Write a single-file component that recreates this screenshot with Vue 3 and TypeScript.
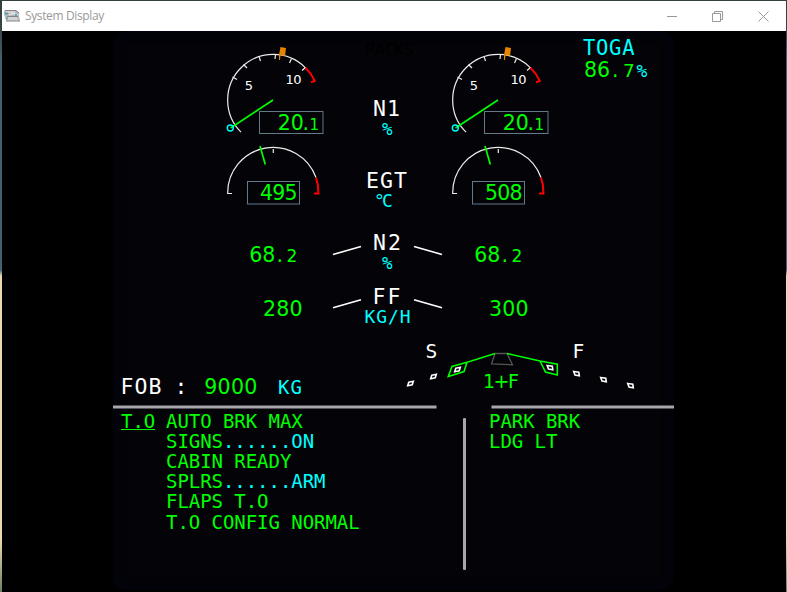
<script setup lang="ts">
interface Label {
  text: string
  x: number | string
  y: number
  tone: 'white' | 'green' | 'cyan' | 'dark'
  width?: number
  size?: number
}

interface Engine {
  shift: number
  egt: string
}

const engines: Engine[] = [
  { shift: 0, egt: '495' },
  { shift: 225, egt: '508' },
]

const labels: Label[] = [
  { text: 'PACKS', x: 365, y: 55, tone: 'dark', size: 16, width: 49 },
  { text: 'TOGA', x: 583, y: 54.8, tone: 'cyan', size: 20.5, width: 51.5 },
  { text: '86', x: 584, y: 76.5, tone: 'green', width: 26 },
  { text: '.', x: 612, y: 76.5, tone: 'green' },
  { text: '7', x: 623, y: 76.5, tone: 'green', size: 18.5 },
  { text: '%', x: 636.5, y: 76.8, tone: 'cyan', size: 18 },
  { text: 'N1', x: 373, y: 116.3, tone: 'white', width: 27 },
  { text: '%', x: 382, y: 134.8, tone: 'cyan', size: 17.5 },
  { text: 'EGT', x: 366, y: 188.3, tone: 'white', width: 41 },
  { text: '°C', x: '374 382', y: 207.3, tone: 'cyan', size: 18 },
  { text: 'N2', x: 373, y: 250.3, tone: 'white', width: 28 },
  { text: '%', x: 382, y: 268.8, tone: 'cyan', size: 17.5 },
  { text: 'FF', x: 372.5, y: 303.5, tone: 'white', width: 28 },
  { text: 'KG/H', x: 364.5, y: 322.5, tone: 'cyan', size: 18, width: 46 },
  { text: '280', x: 263, y: 316, tone: 'green', width: 39.5 },
  { text: '300', x: 489, y: 316, tone: 'green', width: 39.5 },
  { text: 'S', x: 425.5, y: 357.5, tone: 'white', size: 19.5 },
  { text: 'F', x: 572.5, y: 357.5, tone: 'white', size: 19.5 },
  { text: '1+F', x: 483, y: 388, tone: 'green', size: 19, width: 36 },
  { text: 'FOB', x: 120.5, y: 394.4, tone: 'white', width: 41 },
  { text: ':', x: 174.5, y: 394.4, tone: 'white' },
  { text: '9000', x: 204.3, y: 394.4, tone: 'green', width: 53 },
  { text: 'KG', x: 278, y: 394.2, tone: 'cyan', size: 19, width: 24 },
]

const n1Ticks = [
  [305.5, 67.5, 302, 70.5],
  [291.5, 58.5, 289.5, 63],
  [275.5, 54.5, 275, 59],
  [259, 56.5, 260.5, 61],
  [243.5, 64.5, 247, 68],
  [232.5, 77, 237, 79.5],
]

const slatMarks = [[410.5, 383.5], [433.5, 376.5], [457.5, 369.5]]
const flapMarks = [[550, 367.5], [576.5, 373.5], [603.5, 379.5], [630.5, 385.5]]

const memo = [
  { item: 'AUTO BRK MAX', action: '' },
  { item: 'SIGNS', action: '......ON' },
  { item: 'CABIN READY', action: '' },
  { item: 'SPLRS', action: '......ARM' },
  { item: 'FLAPS T.O', action: '' },
  { item: 'T.O CONFIG NORMAL', action: '' },
]
const status = ['PARK BRK', 'LDG LT']
</script>

<template>
  <div class="desktop">
    <div class="window">
      <header class="titlebar">
        <svg class="app-icon" width="16" height="12" viewBox="0 0 16 12">
          <path d="M1 .5H12L15 3V6L16 11H2L1 7L0 5V1Z" fill="#b8b8b8" />
          <path d="M2 2H11M5 5L9 3.5L14 5M3 8H13M4 10H14" stroke="#eee" stroke-width="1.2" fill="none" />
          <path d="M1 .5H12L15 3M3 6.5H14M2 11H16" stroke="#858585" fill="none" />
          <path d="M1 3.5H4M11 5H13M3 7.5V9" stroke="#3399bd" stroke-width="1.5" />
        </svg>
        <span class="title">System Display</span>
        <div class="controls">
          <svg width="10" height="11" viewBox="0 0 10 11"><path d="M0 5.5H10" /></svg>
          <svg width="11" height="11" viewBox="0 0 11 11"><path d="M.5 2.5H8.5V10.5H.5ZM2.5 2.5V.5H10.5V8.5H8.5" /></svg>
          <svg width="11" height="11" viewBox="0 0 11 11"><path d="M.5 .5L10.5 10.5M10.5 .5L.5 10.5" /></svg>
        </div>
      </header>

      <main class="screen">
        <div class="panel">
          <svg class="engine-display" width="561" height="379" viewBox="113 31 561 379">
            <g v-for="e in engines" :key="e.shift" :transform="`translate(${e.shift} 0)`">
              <path class="scale" d="M241 132.2A45.5 45.5 0 1 1 305.5 67.8" />
              <path v-for="(t, i) in n1Ticks" :key="i" class="scale" :d="`M${t[0]} ${t[1]}L${t[2]} ${t[3]}`" />
              <path class="limit" d="M305.5 67.8A45.5 45.5 0 0 1 314.8 81L311 82.3" />
              <path class="target" d="M280.5 47L286 48L285 56L280.5 55L280 60H279V55Z" />
              <text class="white" x="244.7" y="89.7" font-size="13">5</text>
              <text class="white" x="285.5" y="84" font-size="13" textLength="16">10</text>
              <path class="needle" d="M273 100L230.5 128" />
              <circle class="throttle" cx="230.3" cy="128" r="3" />
              <rect class="box" x="259.5" y="111.5" width="63.5" height="22" />
              <text class="green" x="277.8" y="130.3" textLength="26">20</text>
              <text class="green" x="302.5" y="130.3">.</text>
              <text class="green" x="309.5" y="130.3" font-size="15">1</text>

              <path class="scale" d="M232 193.5H227.7A45.5 45.5 0 0 1 316 177.5M273.3 149V153" />
              <path class="limit" d="M316 177.5A45.5 45.5 0 0 1 318.5 193.5H314" />
              <path class="needle" d="M260 146L265.3 164.5" />
              <rect class="box" x="247.5" y="181.5" width="52" height="22.5" />
              <text class="green" x="260" y="200.3" textLength="37.5">{{ e.egt }}</text>

              <text class="green" x="249.3" y="262.3" textLength="26">68</text>
              <text class="green" x="276.5" y="262.3">.</text>
              <text class="green" x="286.5" y="262.3" font-size="17">2</text>
            </g>

            <path class="link" d="M333 254.5L361 246.5M414 246.5L442 254.5M333 307.7L361 299.7M414 299.7L442 307.7" />

            <path class="neutral" d="M495 353.5H507L512.5 364.7L491.5 364Z" />
            <path class="flap" d="M495 353.5L467 362.3L464 371.5L448.3 376.5L452 366.5L467 362.3M507 353.5L540 361L557.3 364.2V375L545.5 372L540 361" />
            <path v-for="m in slatMarks" :key="m[0]" class="mark" :transform="`translate(${m[0]} ${m[1]})`" d="M-1.7 -1.2L2.8 -2.2L1.7 1.2L-2.8 2.2Z" />
            <path v-for="m in flapMarks" :key="m[0]" class="mark" :transform="`translate(${m[0]} ${m[1]})`" d="M-2.8 -2L2.3 -1.3L2.8 2.2L-1.5 1.5Z" />

            <text v-for="(l, i) in labels" :key="i" :class="l.tone" :x="l.x" :y="l.y" :font-size="l.size ?? (l.tone === 'white' ? 21.5 : 20.5)" :textLength="l.width">{{ l.text }}</text>
            <path class="divider" d="M113 407H436.5M491.5 407H674" />
          </svg>

          <section class="messages">
            <div class="memo">
              <span class="heading">T.O</span>
              <div class="lines">
                <div v-for="m in memo" :key="m.item">{{ m.item }}<span class="action">{{ m.action }}</span></div>
              </div>
            </div>
            <div class="bar"></div>
            <div class="lines status">
              <div v-for="s in status" :key="s">{{ s }}</div>
            </div>
          </section>
        </div>
      </main>
    </div>
  </div>
</template>

<style>
body {
  margin: 0;
  overflow: hidden;
}
</style>

<style scoped>
.desktop {
  box-sizing: border-box;
  width: 787px;
  height: 592px;
  padding: 1px 1px 0 2px;
  background: linear-gradient(#34423f 0 22px, #45606f 60px 270px, #eadba8 276px 540px, #6d8065);
}
.window {
  display: flex;
  flex-direction: column;
  height: 591px;
  background: #000;
}
.titlebar {
  display: flex;
  align-items: center;
  box-sizing: border-box;
  height: 30px;
  padding: 0 17px 0 2px;
  background: #fff;
}
.title {
  margin-left: 5px;
  font: 12px/16px "Open Sans", "Noto Sans", sans-serif;
  letter-spacing: -0.37px;
  color: #999;
}
.controls {
  display: flex;
  gap: 35px;
  margin-left: auto;
}
.controls path {
  fill: none;
  stroke: #999;
}
.screen {
  display: flex;
  flex: 1;
  padding-left: 111px;
}
.panel {
  width: 561px;
  height: 559px;
  border-radius: 14px;
  background: #030308;
  box-shadow: inset 0 0 12px #040412;
  font-family: "DejaVu Sans Mono", monospace;
}
.engine-display {
  display: block;
  font-size: 20.5px;
}
.engine-display text {
  font-family: "DejaVu Sans Mono", monospace;
}
.engine-display text.green,
.engine-display text[font-size="13"] {
  font-family: "DejaVu Sans", sans-serif;
}
.white { fill: #fff; }
.green { fill: #0f0; }
.cyan { fill: #0ff; }
.dark { fill: #000; }
.scale {
  fill: none;
  stroke: #eee;
  stroke-width: 1.2;
}
.limit {
  fill: none;
  stroke: #f00;
  stroke-width: 2;
}
.target { fill: #e88300; }
.needle {
  stroke: #0f0;
  stroke-width: 1.7;
}
.throttle {
  fill: none;
  stroke: #0ff;
  stroke-width: 1.4;
}
.box {
  fill: none;
  stroke: #64798a;
}
.link {
  stroke: #fff;
  stroke-width: 1.7;
}
.neutral {
  fill: none;
  stroke: #555;
  stroke-width: 1.3;
}
.flap {
  fill: none;
  stroke: #0f0;
  stroke-width: 1.6;
}
.mark {
  fill: none;
  stroke: #fff;
  stroke-width: 1.6;
}
.divider {
  stroke: #a7a6ad;
  stroke-width: 2.8;
}
.messages {
  display: grid;
  grid-template-columns: 342px 3px 1fr;
  padding-left: 8px;
  font-size: 19px;
  line-height: 20.2px;
  letter-spacing: -0.05px;
  white-space: pre;
  color: #0f0;
}
.messages .lines {
  padding-top: 0.6px;
}
.messages .status {
  padding-left: 23px;
}
.memo {
  display: flex;
  align-items: flex-start;
}
.heading {
  width: 34px;
  height: 18px;
  margin-top: 0.6px;
  border-bottom: 1px solid #0f0;
}
.memo .lines {
  margin-left: 11px;
}
.action {
  color: #0ff;
}
.bar {
  width: 3px;
  height: 152px;
  margin-top: 8px;
  border-radius: 1px;
  background: #a7a6ad;
}
</style>
